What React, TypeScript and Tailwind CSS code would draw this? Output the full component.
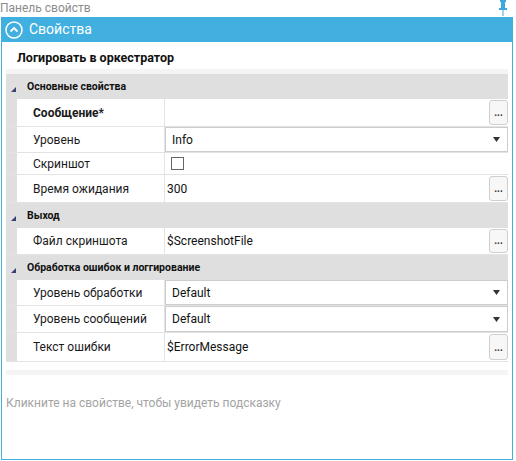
import React from 'react';

type Row =
  | { kind: 'text'; label: string; value?: string; bold?: boolean; button?: boolean; h: number }
  | { kind: 'combo'; label: string; value: string; h: number }
  | { kind: 'check'; label: string; h: number };

type Section = { title: string; rows: Row[] };

const sections: Section[] = [
  {
    title: 'Основные свойства',
    rows: [
      { kind: 'text', label: 'Сообщение*', bold: true, button: true, h: 28 },
      { kind: 'combo', label: 'Уровень', value: 'Info', h: 26 },
      { kind: 'check', label: 'Скриншот', h: 22 },
      { kind: 'text', label: 'Время ожидания', value: '300', button: true, h: 28 },
    ],
  },
  {
    title: 'Выход',
    rows: [{ kind: 'text', label: 'Файл скриншота', value: '$ScreenshotFile', button: true, h: 27 }],
  },
  {
    title: 'Обработка ошибок и логгирование',
    rows: [
      { kind: 'combo', label: 'Уровень обработки', value: 'Default', h: 26 },
      { kind: 'combo', label: 'Уровень сообщений', value: 'Default', h: 27 },
      { kind: 'text', label: 'Текст ошибки', value: '$ErrorMessage', button: true, h: 29 },
    ],
  },
];

const DotsButton = () => (
  <div className="absolute right-0 top-[1px] bottom-[1px] w-[19px] rounded-[3px] border border-[#cfcfcf] bg-[#f7f7f7] flex items-end justify-center pb-[6px]">
    <span className="text-[10px] leading-none font-bold text-[#333]">...</span>
  </div>
);

const PropertyRow = ({ row }: { row: Row }) => (
  <div className="flex border-b border-[#e3e3e3]" style={{ height: row.h }}>
    <div className="w-[11px] shrink-0 bg-[#dfdfdf]" />
    <div
      className={`w-[148px] shrink-0 border-r border-[#e3e3e3] pl-[16px] flex items-center text-[12px] text-[#1a1a1a] ${
        row.kind === 'text' && row.bold ? 'font-bold' : ''
      }`}
    >
      {row.label}
    </div>
    <div className="relative flex-1 flex items-center">
      {row.kind === 'combo' && (
        <div className="absolute inset-0 border border-[#cdcdcd] flex items-center pl-[6px] pr-[7px] justify-between text-[12px] text-[#111]">
          <span>{row.value}</span>
          <svg width="7" height="5" viewBox="0 0 7 5">
            <polygon points="0,0 7,0 3.5,5" fill="#333" />
          </svg>
        </div>
      )}
      {row.kind === 'check' && <div className="ml-[6px] w-[13px] h-[13px] border border-[#666] bg-white" />}
      {row.kind === 'text' && (
        <>
          <span className="pl-[2px] text-[12px] text-[#111]">{row.value}</span>
          {row.button && <DotsButton />}
        </>
      )}
    </div>
  </div>
);

export default function App() {
  return (
    <div className="w-[516px] h-[461px] bg-white font-['Roboto',sans-serif] overflow-hidden">
      <div className="h-[17px] flex items-start justify-between pr-[9px]">
        <span className="text-[12px] leading-[16px] text-[#8c8c8c]">Панель свойств</span>
        <svg width="8" height="16" viewBox="0 0 8 16">
          <rect x="1" y="0" width="6" height="2" fill="#3aa9de" />
          <rect x="2" y="2" width="4" height="6" fill="#3aa9de" />
          <rect x="0" y="8" width="8" height="2" fill="#3aa9de" />
          <rect x="3.5" y="10" width="1" height="6" fill="#3aa9de" />
        </svg>
      </div>
      <div className="ml-[1px] w-[512px] h-[443px] border border-[#41b0e0] flex flex-col">
        <div className="h-[25px] -mt-[1px] bg-[#41b0e0] flex items-center pl-[3px] gap-[6px]">
          <svg width="18" height="18" viewBox="0 0 18 18">
            <circle cx="9" cy="9" r="8" fill="none" stroke="#fff" strokeWidth="1.5" />
            <polyline points="5.5,10.5 9,7 12.5,10.5" fill="none" stroke="#fff" strokeWidth="1.8" />
          </svg>
          <span className="text-[14px] text-white">Свойства</span>
        </div>
        <div className="h-[27px] flex items-center pl-[15px] pt-[6px] text-[12.5px] font-bold text-[#111]">
          Логировать в оркестратор
        </div>
        <div className="mx-[4px]">
          <div className="h-[5px] bg-[#f4f4f4]" />
          {sections.map((s) => (
            <div key={s.title}>
              <div className="h-[25px] bg-[#dfdfdf] flex items-center">
                <svg width="5" height="5" viewBox="0 0 5 5" className="ml-[5px] mt-[5px]">
                  <polygon points="5,0 5,5 0,5" fill="#3c3f70" />
                </svg>
                <span className="ml-[11px] text-[10.5px] font-bold text-[#111]">{s.title}</span>
              </div>
              {s.rows.map((r) => (
                <PropertyRow key={r.label} row={r} />
              ))}
            </div>
          ))}
          <div className="h-[8px]" />
          <div className="h-[5px] bg-[#f4f4f4]" />
        </div>
        <div className="mt-[19px] pl-[4px] text-[12px] text-[#a3a3a3]">
          Кликните на свойстве, чтобы увидеть подсказку
        </div>
      </div>
    </div>
  );
}
